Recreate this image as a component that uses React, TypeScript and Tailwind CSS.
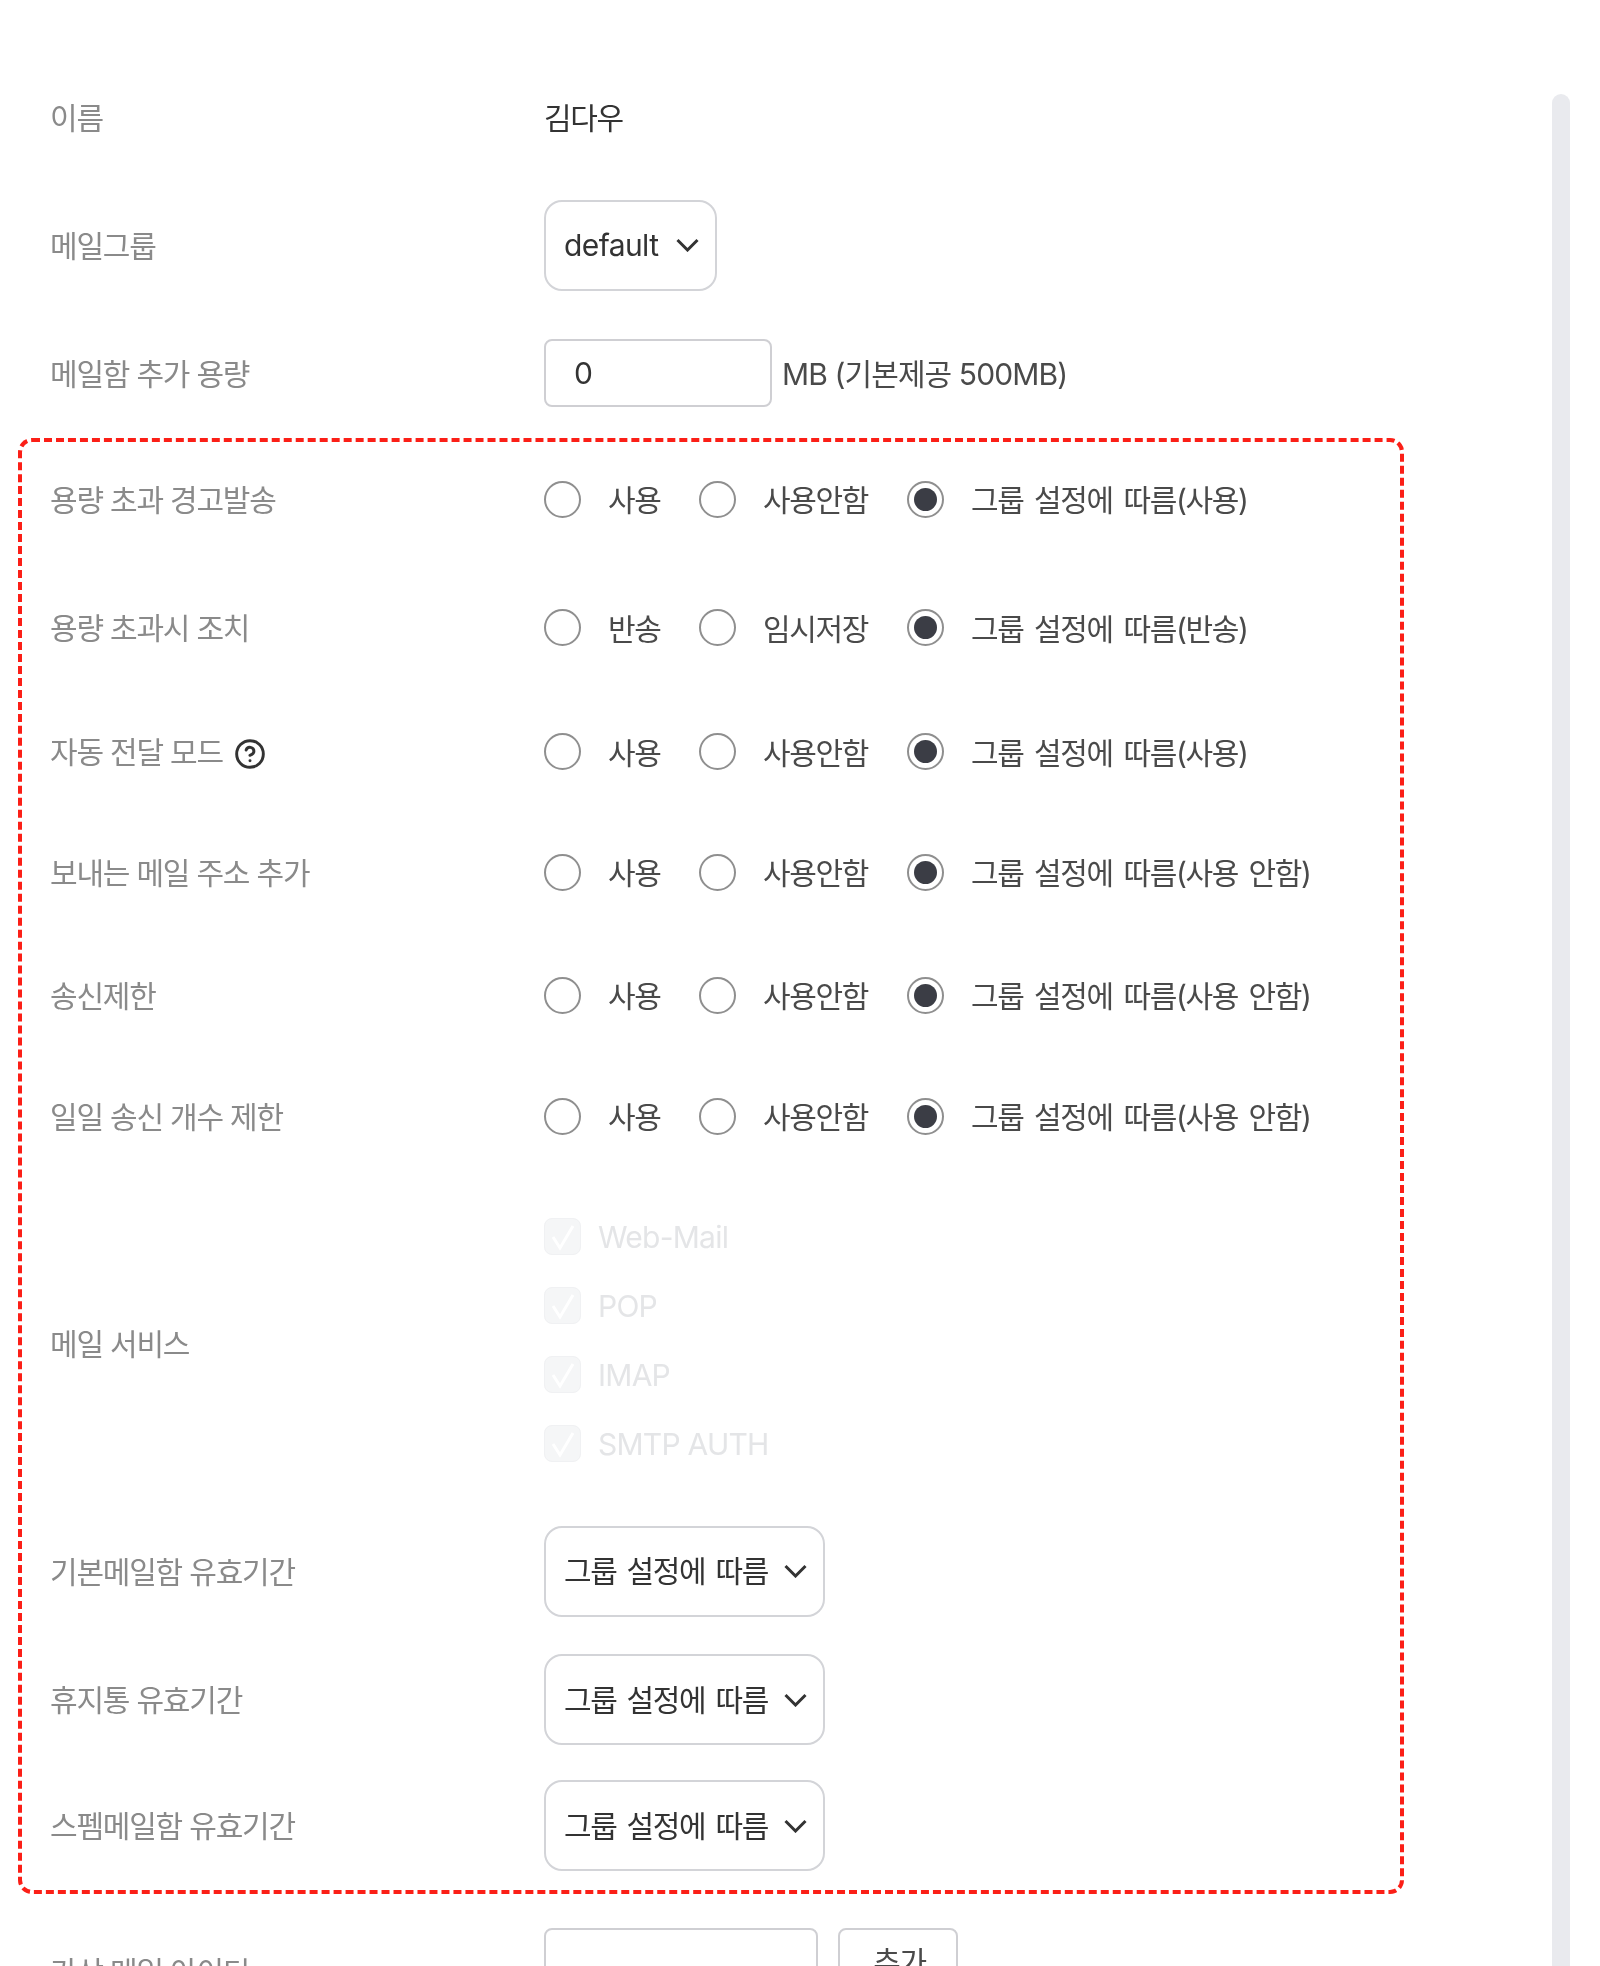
import { CircleHelp } from 'lucide-react';

const radioRows = [
  { label: '용량 초과 경고발송', a: '사용', b: '사용안함', c: '그룹 설정에 따름(사용)', h: 'h-[114px]' },
  { label: '용량 초과시 조치', a: '반송', b: '임시저장', c: '그룹 설정에 따름(반송)', h: 'h-[143px]' },
  { label: '자동 전달 모드', a: '사용', b: '사용안함', c: '그룹 설정에 따름(사용)', h: 'h-[105px]', help: true },
  { label: '보내는 메일 주소 추가', a: '사용', b: '사용안함', c: '그룹 설정에 따름(사용 안함)', h: 'h-[136px]' },
  { label: '송신제한', a: '사용', b: '사용안함', c: '그룹 설정에 따름(사용 안함)', h: 'h-[110px]' },
  { label: '일일 송신 개수 제한', a: '사용', b: '사용안함', c: '그룹 설정에 따름(사용 안함)', h: 'h-[132px]' },
];

const services = ['Web-Mail', 'POP', 'IMAP', 'SMTP AUTH'];

const selectRows = [
  { label: '기본메일함 유효기간', h: 'h-[134px]' },
  { label: '휴지통 유효기간', h: 'h-[123px]' },
  { label: '스펨메일함 유효기간', h: 'h-[129px]' },
];

function Label({ children }: { children: React.ReactNode }) {
  return <div className="w-[494px] shrink-0 flex items-center gap-[11px] pt-[1px] text-[#8a8a8a] tracking-[-0.04em]">{children}</div>;
}

function Chevron() {
  return (
    <svg width="23" height="14" viewBox="0 0 23 14" fill="none" className="shrink-0">
      <path d="M1.5 2l10 10 10-10" stroke="#333" strokeWidth="3" />
    </svg>
  );
}

function SelectBox({ value, className, latin }: { value: string; className: string; latin?: boolean }) {
  return (
    <div className={`h-[91px] flex items-center justify-between pl-[18px] pr-[16px] rounded-[18px] border-2 border-[#d3d4d8] text-[#333] ${className}`}>
      <span className={latin ? 'tracking-[-0.02em]' : '[word-spacing:3px]'}>{value}</span>
      <Chevron />
    </div>
  );
}

function Radio({ checked, text, className }: { checked?: boolean; text: string; className: string }) {
  return (
    <label className={`flex items-center gap-[27px] text-[#4a4a4a] ${className}`}>
      <span className="w-[37px] h-[37px] rounded-full border-[2.5px] border-[#8f8f8f] flex items-center justify-center bg-white shrink-0">
        {checked && <span className="w-[23px] h-[23px] rounded-full bg-[#3b3d45]" />}
      </span>
      <span className="pt-[2px] [word-spacing:3.5px]">{text}</span>
    </label>
  );
}

export default function App() {
  return (
    <div className="w-[1600px] h-[1966px] overflow-hidden bg-white flex blur-[0.5px] text-[30px] leading-[36px] tracking-[-0.045em] font-['Inter','Noto_Sans_CJK_KR',sans-serif]">
      <div className="w-[1404px] shrink-0 pt-[72px]">
        <div className="pl-[50px]">
          <div className="flex items-center h-[90px]">
            <Label>이름</Label>
            <div className="pt-[1px] text-[#333]">김다우</div>
          </div>
          <div className="flex items-center h-[90px] mt-[38px]">
            <Label>메일그룹</Label>
            <SelectBox value="default" latin className="w-[173px]" />
          </div>
          <div className="flex items-center h-[90px] mt-[38px]">
            <Label>메일함 추가 용량</Label>
            <input
              readOnly
              value="0"
              className="w-[228px] h-[68px] pl-[28px] rounded-[8px] border-2 border-[#cfcfd3] text-[#333] outline-none tracking-normal"
            />
            <span className="ml-[10px] pt-[2px] text-[#4a4a4a] tracking-[-0.03em]">MB (기본제공 500MB)</span>
          </div>
        </div>

        <div className="ml-[18px] mt-[20px] w-[1386px] h-[1456px] border-4 border-dashed border-[#fb1f17] rounded-[14px] pl-[28px]">
          {radioRows.map((row) => (
            <div key={row.label} className={`flex items-center ${row.h}`}>
              <Label>
                {row.label}
                {row.help && <CircleHelp size={32} strokeWidth={2.2} className="mt-[3px] text-[#333]" />}
              </Label>
              <Radio text={row.a} className="w-[155px]" />
              <Radio text={row.b} className="w-[208px]" />
              <Radio checked text={row.c} />
            </div>
          ))}

          <div className="flex items-center h-[322px]">
            <Label>메일 서비스</Label>
            <div className="flex flex-col gap-[32px] -mt-[6px]">
              {services.map((name) => (
                <div key={name} className="flex items-center gap-[17px] h-[37px] text-[#e4e5e7]">
                  <span className="w-[37px] h-[37px] rounded-[8px] bg-[#f5f6f7] border border-[#f0f1f3] flex items-center justify-center">
                    <svg width="28" height="28" viewBox="0 0 28 28" fill="none">
                      <path d="M4 14l7 11L24 3" stroke="#fff" strokeWidth="3" />
                    </svg>
                  </span>
                  <span className="tracking-[-0.025em]">{name}</span>
                </div>
              ))}
            </div>
          </div>

          {selectRows.map((row) => (
            <div key={row.label} className={`flex items-center ${row.h}`}>
              <Label>{row.label}</Label>
              <SelectBox value="그룹 설정에 따름" className="w-[281px]" />
            </div>
          ))}
        </div>

        <div className="flex items-start pl-[50px] mt-[34px] h-[90px]">
          <div className="w-[494px] shrink-0 pt-[26px] text-[#8a8a8a] tracking-[-0.04em]">가상 메일 아이디</div>
          <div className="w-[274px] h-[68px] rounded-[8px] border-2 border-[#cfcfd3]" />
          <button className="ml-[20px] pl-[3px] w-[120px] h-[68px] rounded-[8px] border-2 border-[#cfcfd3] text-[#4a4a4a]">추가</button>
        </div>
      </div>

      <div className="ml-[148px] mt-[94px] w-[18px] h-full rounded-t-[9px] bg-[#e9eaee]" />
    </div>
  );
}
